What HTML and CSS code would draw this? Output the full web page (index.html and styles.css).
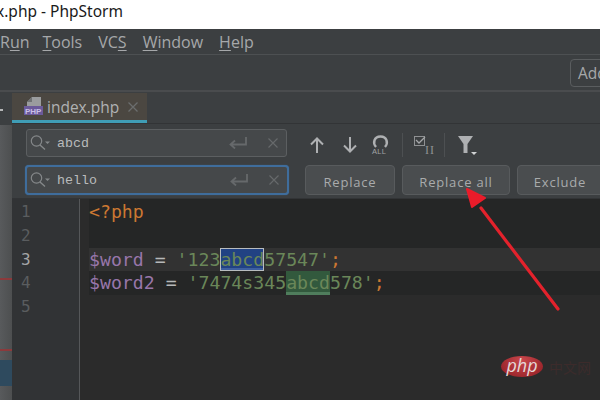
FILE: index.html
```html
<!DOCTYPE html>
<html lang="en">
<head>
<meta charset="utf-8">
<title>PhpStorm</title>
<link rel="stylesheet" href="styles.css">
</head>
<body>
<div class="window">
  <header class="title">x.php - PhpStorm</header>
  <nav class="menu">
    <span>R<u>u</u>n</span><span><u>T</u>ools</span><span>VC<u>S</u></span><span><u>W</u>indow</span><span><u>H</u>elp</span>
  </nav>
  <div class="toolbar"><button class="add">Add</button></div>
  <div class="main">
    <aside class="strip">
      <div class="strip-top"><i class="dot"></i></div>
      <div class="strip-bar">
        <i class="mark mark-a"></i><i class="mark mark-b"></i><i class="mark-blue"></i>
      </div>
    </aside>
    <div class="content">
      <div class="tabs">
        <div class="tab">
          <svg class="php-icon" width="20" height="20" viewBox="0 0 20 20">
            <path d="M8 1h9v10H3V6z" fill="#9a9c9e"/><path d="M3 6h5V1z" fill="#6f7274"/>
            <rect x="0" y="10" width="19" height="9" fill="#6b5a9a"/>
            <text x="1" y="18" class="php-label">PHP</text>
          </svg>
          <span class="tab-name">index.php</span>
          <svg class="tab-close" width="10" height="10" viewBox="0 0 10 10"><path d="M.5.5l9 9M9.5.5l-9 9" stroke="#6b6d6e" stroke-width="1.3"/></svg>
        </div>
      </div>
      <div class="panel">
        <div class="fields">
          <div class="field">
            <svg class="search" width="20" height="18" viewBox="0 0 20 18"><circle cx="6.5" cy="7" r="5.2" fill="none" stroke="#85888a" stroke-width="1.2"/><path d="M10 11l5 4.5" stroke="#85888a" stroke-width="1.4"/><path d="M15 7.5h5l-2.5 2.5z" fill="#85888a"/></svg>
            <span class="query">abcd</span>
            <svg class="enter" width="18" height="12" viewBox="0 0 18 12"><path d="M17 0v7.5H2M6 3.5L1.5 7.5 6 11.5" fill="none" stroke="#66696b" stroke-width="1.8"/></svg>
            <svg class="clear" width="10" height="10" viewBox="0 0 10 10"><path d="M.5.5l9 9M9.5.5l-9 9" stroke="#66696b" stroke-width="1.2"/></svg>
          </div>
          <div class="field field-focus">
            <svg class="search" width="20" height="18" viewBox="0 0 20 18"><circle cx="6.5" cy="7" r="5.2" fill="none" stroke="#85888a" stroke-width="1.2"/><path d="M10 11l5 4.5" stroke="#85888a" stroke-width="1.4"/><path d="M15 7.5h5l-2.5 2.5z" fill="#85888a"/></svg>
            <span class="query">hello</span>
            <svg class="enter" width="18" height="12" viewBox="0 0 18 12"><path d="M17 0v7.5H2M6 3.5L1.5 7.5 6 11.5" fill="none" stroke="#66696b" stroke-width="1.8"/></svg>
            <svg class="clear" width="10" height="10" viewBox="0 0 10 10"><path d="M.5.5l9 9M9.5.5l-9 9" stroke="#66696b" stroke-width="1.2"/></svg>
          </div>
        </div>
        <div class="actions">
          <div class="tools">
            <svg width="14" height="16" viewBox="0 0 14 16" class="t-up"><path d="M7 16V2M1 7.5L7 1.5l6 6" fill="none" stroke="#aeb0b2" stroke-width="2"/></svg>
            <svg width="14" height="16" viewBox="0 0 14 16" class="t-down"><path d="M7 0v14M1 8.5l6 6 6-6" fill="none" stroke="#aeb0b2" stroke-width="2"/></svg>
            <svg width="20" height="20" viewBox="0 0 20 20" class="t-all"><path d="M5 12C1.5 8 3 1.5 9.5 1.5S17.5 8 14 12" fill="none" stroke="#aeb0b2" stroke-width="2.4"/><text x="1" y="19" class="all-label">ALL</text></svg>
            <i class="sep sep-a"></i>
            <svg width="21" height="19" viewBox="0 0 21 19" class="t-check"><rect x=".5" y=".5" width="10" height="9" fill="none" stroke="#8f9193"/><path d="M2 4l3 3 6-6" fill="none" stroke="#a5a7a9" stroke-width="1.3"/><text x="11" y="18" class="ii-label">II</text></svg>
            <i class="sep sep-b"></i>
            <svg width="19" height="20" viewBox="0 0 19 20" class="t-filter"><path d="M0 0h15L9.5 8v9h-4V8z" fill="#aeb0b2"/><path d="M13 16h6l-3 3z" fill="#d0d2d3"/></svg>
          </div>
          <div class="buttons">
            <button class="btn btn-replace">Replace</button>
            <button class="btn btn-all">Replace all</button>
            <button class="btn btn-exclude">Exclude</button>
          </div>
        </div>
      </div>
      <div class="editor">
        <div class="gutter">
          <div class="num">1</div><div class="num">2</div><div class="num num-cur">3</div><div class="num">4</div><div class="num">5</div>
        </div>
        <div class="code">
          <div class="line l-dark l-top"><span class="kw">&lt;?php</span></div>
          <div class="line l-dark l-top"></div>
          <div class="line l-cur"><span class="var">$word</span> <span class="op">=</span> <span class="str">'123<span class="hit-cur">abcd</span>57547'</span><span class="kw">;</span></div>
          <div class="line l-dark"><span class="var">$word2</span> <span class="op">=</span> <span class="str">'7474s345<span class="hit">abcd</span>578'</span><span class="kw">;</span></div>
          <div class="line"></div>
        </div>
      </div>
    </div>
  </div>
  <svg class="arrow" width="110" height="130" viewBox="0 0 110 130"><path d="M99 121L22 20" stroke="#e3222c" stroke-width="3.2" stroke-linecap="round"/><path d="M8 1L13 19 26 10z" fill="#ea1c2a" stroke="#ea1c2a" stroke-width="2" stroke-linejoin="round"/></svg>
  <div class="watermark">
    <span class="wm-logo">php</span><span class="wm-text">中文网</span>
  </div>
</div>
</body>
</html>
```

FILE: styles.css
```css
* { box-sizing: border-box; }
html, body { margin: 0; padding: 0; }
body { width: 600px; height: 400px; overflow: hidden; background: #2b2b2b; }
svg { display: block; flex: none; }

.window { position: relative; width: 600px; height: 400px; display: flex; flex-direction: column; overflow: hidden; font-family: "Open Sans", sans-serif; }

.title { height: 29px; flex: none; background: #fff; color: #1a1a1a; font: 15.5px/22px "Noto Sans", "Open Sans", sans-serif; text-indent: -4px; }

.menu { height: 26px; flex: none; background: #3c3f41; border-bottom: 1px solid #4d5052; display: flex; gap: 13px; color: #a6a8aa; font: 16px/26px "Open Sans", sans-serif; }
.menu u { text-underline-offset: 2px; }
.menu span:nth-child(n+3) { margin-left: 3px; }

.toolbar { height: 37px; flex: none; background: #3c3f41; border-bottom: 2px solid #4a4c4e; display: flex; justify-content: flex-end; align-items: center; overflow: hidden; }
.add { width: 45px; height: 28px; flex: none; margin-right: -15px; padding: 0 0 0 7px; text-align: left; background: #3c3f41; border: 1px solid #5a5d5f; border-radius: 4px; color: #a6a8aa; font: 15.5px "Open Sans", sans-serif; }

.main { flex: 1; display: flex; min-height: 0; }

.strip { width: 12px; flex: none; display: flex; flex-direction: column; background: #3c3f41; }
.strip-top { height: 33px; flex: none; display: flex; align-items: center; padding-top: 2px; }
.dot { display: block; width: 3px; height: 2px; background: #b5b7b8; }
.strip-bar { flex: 1; position: relative; background: linear-gradient(90deg, #585a5c, #4d4f50); }
.mark { position: absolute; left: 0; width: 12px; height: 2px; background: #8c3a3c; }
.mark-a { top: 153px; }
.mark-b { top: 224px; }
.mark-blue { position: absolute; left: 0; top: 235px; width: 12px; height: 26px; background: #2e4a5e; }

.content { flex: 1; display: flex; flex-direction: column; min-width: 0; }

.tabs { height: 32px; flex: none; background: #3c3f41; border-bottom: 1px solid #323436; padding-top: 1px; }
.tab { width: 135px; height: 30px; display: flex; align-items: center; gap: 3px; padding: 0 0 0 12px; background: #4b4741; border-bottom: 3px solid #3f9db6; }
.php-icon { margin-top: -2px; }
.php-label { font: bold 8px "Liberation Sans", sans-serif; fill: #c8bfe6; }
.tab-name { color: #b0b2b3; font: 15.5px/22px "Open Sans", sans-serif; }
.tab-close { margin-left: 6px; }

.panel { height: 75px; flex: none; background: #3c3f41; display: flex; padding-left: 13px; border-bottom: 1px solid #323436; }
.fields { width: 264px; flex: none; display: flex; flex-direction: column; }
.field { width: 261px; height: 28px; margin: 5px 0 0 1px; display: flex; align-items: center; background: #45484a; border: 1px solid #5c5f61; border-radius: 3px; padding-left: 3px; }
.field-focus { width: 264px; height: 30px; margin: 8px 0 0 0; border: 2px solid #3f6d9c; border-radius: 4px; box-shadow: 0 0 1px #3f6d9c; }
.query { font: 13.3px "Liberation Mono", monospace; color: #b9bbbc; margin-left: 7px; flex: 1; }
.enter { margin-right: 21px; }
.clear { margin-right: 8px; }

.actions { flex: 1; display: flex; flex-direction: column; margin-left: 16px; min-width: 0; }
.tools { height: 41px; flex: none; display: flex; align-items: center; padding-left: 5px; }
.t-down { margin-left: 19px; }
.t-all { margin-left: 14px; }
.sep { display: block; width: 1px; height: 24px; background: #4d5052; flex: none; }
.sep-a { margin-left: 11px; }
.t-check { margin-left: 11px; margin-top: 2px; }
.sep-b { margin-left: 9px; }
.t-filter { margin-left: 13px; margin-top: 2px; }
.all-label { font: 7.5px "Liberation Sans", sans-serif; fill: #a0a2a4; letter-spacing: .3px; }
.ii-label { font: 12px "Liberation Serif", serif; fill: #8f9193; letter-spacing: 1px; }

.buttons { display: flex; gap: 7px; }
.btn { height: 30px; flex: none; padding: 3px 0 0; background: #4a4d4f; border: 1px solid #585b5d; border-radius: 4px; color: #a9abac; font: 13px "Open Sans", sans-serif; letter-spacing: .8px; text-align: center; }
.btn-replace { width: 90px; }
.btn-all { width: 108px; }
.btn-exclude { width: 100px; padding-right: 14px; }

.editor { flex: 1; display: flex; min-height: 0; background: #2b2b2b; }
.gutter { width: 68px; flex: none; background: #313335; border-right: 1px solid #555759; padding: 1px 0 0 9px; color: #5a5d5f; }
.num { height: 23.75px; font: 16px/24px "DejaVu Sans Mono", monospace; }
.num-cur { color: #a4a6a7; }
.code { flex: 1; padding-left: 9px; font: 18.2px/24px "DejaVu Sans Mono", monospace; color: #a9b7c6; }
.line { height: 24px; white-space: pre; }
.l-top { height: 24.5px; line-height: 25px; }
.l-dark { background: #252626; }
.l-cur { background: #323232; height: 23px; line-height: 23px; }
.kw { color: #cc7832; }
.var { color: #9876aa; }
.op { color: #b6b8b9; }
.str { color: #6a8759; }
.hit-cur { display: inline-block; height: 23px; background: #214283; outline: 1px solid #b8bcbf; outline-offset: -1px; box-shadow: inset 0 -3px 0 #3d5fa0; }
.hit { display: inline-block; height: 24px; background: #32593d; box-shadow: inset 0 -3px 0 #4f7d5c; }

.arrow { position: absolute; left: 459px; top: 188px; }

.watermark { position: absolute; left: 501px; top: 356px; display: flex; align-items: center; gap: 6px; }
.wm-logo { width: 42px; height: 21px; border-radius: 50%; background: radial-gradient(ellipse at 50% 20%, #c9474c, #8e1c22); color: #e5d8d8; font: italic 18px/18px "Open Sans", sans-serif; text-align: center; }
.wm-text { color: #3c2b2b; font: 14px "Noto Sans CJK SC", sans-serif; }
```
